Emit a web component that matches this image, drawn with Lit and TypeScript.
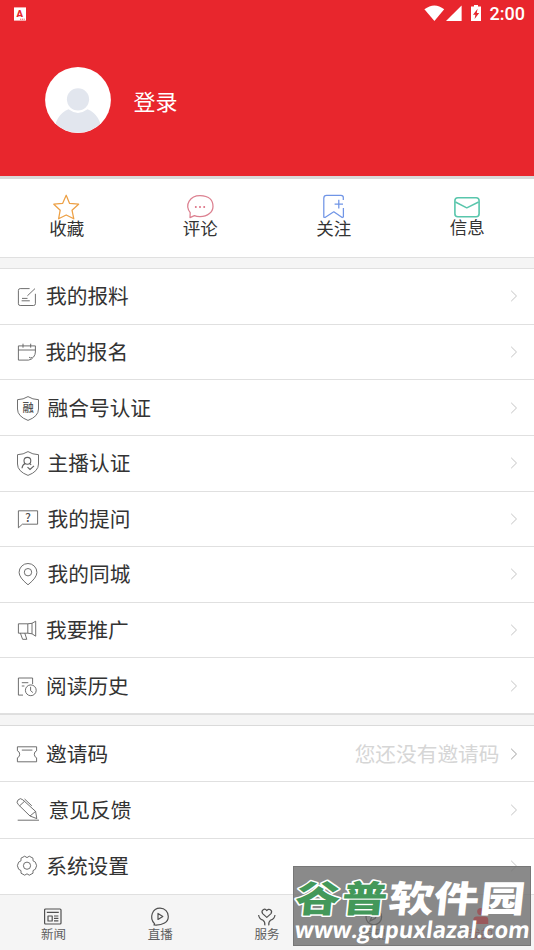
import { LitElement, html, svg, css } from "lit";
import { customElement } from "lit/decorators.js";

const shield = svg`<path d="M12 .6Q7.5 3.5 1.5 3.7V13Q1.5 20.4 12 24.4Q22.5 20.4 22.5 13V3.7Q16.5 3.5 12 .6Z"/>`;

const rowIcons: Record<string, unknown> = {
  edit: svg`<path d="M13.6 4.6H4.2Q2.4 4.6 2.4 6.4V19.8Q2.4 21.5 4.2 21.5H17.6Q19.4 21.5 19.4 19.7V9.8M19 4.6L11.4 11.8M6 14.4H11.5M5.6 16.8H13.8"/>`,
  calendar: svg`<path d="M19.4 12V5.9H2.4V20.1H12.5M2.4 10H19.4M7 3.7V7.7M14.7 3.7V7.7M19.4 12Q19.4 14.6 17.6 17Q15.8 19.6 12.5 20.1M13 17.2Q14.6 18.6 16.4 17.4"/>`,
  media: svg`${shield}<text x="6.4" y="16" font-size="11.3" font-weight="500">融</text>`,
  anchor: svg`${shield}<g stroke-width="1.1"><circle cx="11.4" cy="9.8" r="3.4"/><path d="M9.2 12.4Q6.3 13.6 6 17.3M13.4 12.4L15.2 13.8M11.5 16.2L14 18.5L18 14.8"/></g>`,
  ask: svg`<path d="M2.4 20.8V3.8H21.6V17.2H6.4Z"/><text x="8.9" y="14.6" font-size="12" font-weight="500">?</text>`,
  pin: svg`<path d="M12 22.8Q3.1 15.6 3.1 10.4A8.9 8.9 0 0 1 20.9 10.4Q20.9 15.6 12 22.8Z"/><circle cx="12" cy="10.2" r="3.7"/>`,
  promote: svg`<path d="M11.8 5.8H2.4V15.2H11.8ZM11.8 5.8L16 5.3L19.7 3.2V18.2L16 15.8L11.8 15.2M16 5.3V15.8M4.4 15.2L6.6 21.3H10.8L8.8 15.2"/>`,
  history: svg`<path d="M16.6 10V4H2.4V21.1H7M5.8 8.7H12.3M5.8 12H8.4"/><circle cx="14.8" cy="16.3" r="5.4"/><path d="M14.6 12.8V16.6L16.9 18.6"/>`,
  ticket: svg`<path d="M1.4 4.8H20.6V8.8Q18.3 9.6 18.3 12.3Q18.3 15 20.6 15.8V19.8H1.4V15.8Q3.7 15 3.7 12.3Q3.7 9.6 1.4 8.8ZM5.8 8.1H16.4"/>`,
  pencil: svg`<path d="M14 18L2.2 6.5A3.2 3.2 0 0 1 6.8 1.8L19.6 13.4L20.8 20.6ZM19.6 13.4L14 18M8.5 3.3L3.6 7.8M8.6 1L15.8 7.8M1.7 22.2H23"/>`,
  gear: svg`<path d="M8.7 2.2L11 3.6L13.3 2.2L17 4.2V6.8L19.4 8.2Q21.8 11.7 19.4 15.2L17 16.6V19.2L13.3 21.2L11 19.8L8.7 21.2L5 19.2V16.6L2.6 15.2Q.2 11.7 2.6 8.2L5 6.8V4.2Z" stroke-linejoin="round"/><circle cx="11" cy="11.7" r="3.6"/>`,
};

interface Row { icon: string; label: string; gap: number; note?: string }

const mainRows: Row[] = [
  { icon: "edit", label: "我的报料", gap: 6 },
  { icon: "calendar", label: "我的报名", gap: 5.4 },
  { icon: "media", label: "融合号认证", gap: 7.6 },
  { icon: "anchor", label: "主播认证", gap: 7.6 },
  { icon: "ask", label: "我的提问", gap: 7.6 },
  { icon: "pin", label: "我的同城", gap: 7.6 },
  { icon: "promote", label: "我要推广", gap: 6 },
  { icon: "history", label: "阅读历史", gap: 6 },
];

const moreRows: Row[] = [
  { icon: "ticket", label: "邀请码", gap: 6, note: "您还没有邀请码" },
  { icon: "pencil", label: "意见反馈", gap: 8.6 },
  { icon: "gear", label: "系统设置", gap: 6.2 },
];

const shortcuts = [
  { name: "star", label: "收藏", art: svg`<path stroke="#eda045" d="M13.2 1.2L16.6 9.4L25.6 10.2L19 16.2L20.8 24.8L13.2 21L5.6 24.8L7.2 16.2L.8 10.2L9.6 9.4Z"/>` },
  { name: "comment", label: "评论", art: svg`<path stroke="#dc8090" d="M4.2 18.6C-1.8 10.5 4.2 1.6 14 1.6S27 7 27 12.4S21.8 22.6 14 22.6Q10.5 22.6 8.4 21.6L4 23.6Z"/><g fill="#dc6f82"><circle cx="9.8" cy="13" r="1"/><circle cx="14" cy="13" r="1"/><circle cx="18.2" cy="13" r="1"/></g>` },
  { name: "follow", label: "关注", art: svg`<path stroke="#7095e6" d="M23.3 6V3.6Q23.3 1.4 21 1.4H6.6Q3.8 1.4 3.8 4.2V23.2L5 23.5L13.8 17.8L22.2 23.5L23.4 23V14M18.8 5.8V14.4M14.6 10.1H23"/>` },
  { name: "mail", label: "信息", art: svg`<rect stroke="#59c6ac" stroke-width="1.6" x="1.9" y="3.8" width="24.2" height="19" rx="3"/><path stroke="#59c6ac" stroke-width="1.5" d="M2.4 8L13.8 13.8L25.6 8"/>` },
];

const tabs = [
  { name: "news", label: "新闻", art: svg`<rect x="1.6" y="2" width="16.4" height="15" rx="1"/><path d="M3.8 5.4H15.8M5 9H9.2V14H5ZM11 9H15.4M11 11.4H15.4M11 13.8H15.4"/>` },
  { name: "live", label: "直播", art: svg`<path d="M4.6 16.8C-1.4 10.4 2.6 1.2 10 1.2C15 1.2 18.3 5 18.3 9.4C18.3 15.2 13 18.6 4 18ZM8 6.4V12.4L12.8 9.4Z"/>` },
  { name: "service", label: "服务", art: svg`<path d="M9.8 10.4L5.6 6.6C3.6 3.2 7.8.6 9.8 3.6C11.8.6 16 3.2 14 6.6ZM1.6 8Q2.2 12.2 6 13.2Q8.2 14.4 7.8 18.4M18 8Q17.4 12.2 13.6 13.2Q11.4 14.4 11.8 18.4"/>` },
  { name: "find", label: "发现", art: svg`<circle cx="9.8" cy="10" r="7.8"/><path d="M13.4 6.2L11.2 11.4L6 14L8.4 8.6Z"/>` },
  { name: "mine", label: "我的", art: svg`<g fill="#e8262d" stroke="none"><circle cx="9.8" cy="4.6" r="3.6"/><path d="M2.4 17V13Q2.4 9.6 6 9.6H13.6Q17.2 9.6 17.2 13V17Z"/></g>` },
];

@customElement("app-root")
export class AppRoot extends LitElement {
  static styles = css`
    :host { display: block; position: relative; width: 534px; height: 950px; overflow: hidden; background: #fff; color: #333; font-family: "Noto Sans CJK SC", sans-serif; }
    * { box-sizing: border-box; }
    svg { display: block; fill: none; overflow: visible; }
    .head { height: 179px; background: #e8262d; border-bottom: 3px solid #d9d9d9; color: #fff; display: flex; flex-direction: column; }
    .status { height: 27px; padding: 0 9px 0 14px; display: flex; align-items: center; justify-content: space-between; }
    .signals { display: flex; align-items: center; font: 500 18px/27px Roboto, sans-serif; }
    .user { display: flex; align-items: center; padding: 40px 0 0 45px; gap: 22.5px; font-size: 22px; }
    .user span { line-height: 32px; }
    .shortcuts { height: 79px; display: grid; grid-template-columns: repeat(4, 1fr); border-bottom: 1px solid #e0e0e0; }
    .short { display: flex; flex-direction: column; align-items: center; padding-top: 15px; font-size: 17.5px; line-height: 24px; }
    .short svg { width: 28px; height: 26px; stroke-width: 1.25; stroke-linejoin: round; }
    .short span { margin-top: -3.6px; }
    .short.mail span { margin-top: -5px; }
    .band { background: #f5f5f5; border-bottom: 1px solid #e0e0e0; }
    .band.one { height: 11px; }
    .band.two { height: 12px; border-top: 1px solid #dedede; border-bottom-color: #dadada; }
    .list.main { height: 445.1px; display: grid; grid-template-rows: repeat(8, 55.64px); }
    .list.more { display: grid; grid-template-rows: repeat(3, 56.3px); }
    .row { display: flex; align-items: center; padding: 0 16px 0 16px; border-bottom: 1px solid #e0e0e0; font-size: 20.7px; line-height: 30px; }
    .row > svg { width: 24px; height: 24px; flex: none; stroke: #606060; stroke-width: .9; }
    .row text { fill: #505050; stroke: none; }
    .row .label { flex: 1; padding-bottom: 2px; white-space: nowrap; }
    .note { color: #d6d6d6; margin-right: 10.5px; padding-bottom: 2px; }
    .row .arrow { width: 8px; height: 12px; stroke: #c4c4c4; stroke-width: 1; }
    .row .arrow.dark { stroke: #a0a0a0; }
    .tabs { height: 55px; background: #f5f5f5; display: grid; grid-template-columns: repeat(5, 1fr); }
    .tab { display: flex; flex-direction: column; align-items: center; padding-top: 12px; font-size: 12.5px; line-height: 18px; color: #606060; }
    .tab svg { width: 20px; height: 19px; stroke: #505050; stroke-width: 1.2; stroke-linejoin: round; }
    .tab span { margin-top: -1px; }
    .tab.mine { color: #e8262d; }
    .stamp { position: absolute; left: 293px; top: 866px; width: 238px; height: 80px; background: rgba(116, 116, 116, .84); border: 1px solid #777; }
    .stamp svg { width: 236px; height: 78px; }
    .brand { font: 900 43px "Noto Sans CJK SC", sans-serif; stroke: #fff; stroke-linejoin: round; paint-order: stroke; }
    .green { fill: #43985a; stroke-width: 3.4px; }
    .white { fill: #fff; }
    .site { font: 700 23px "Open Sans", sans-serif; fill: #fff; }
  `;

  private row(r: Row) {
    return html`<div class="row">
      <svg viewBox="0 0 24 24">${rowIcons[r.icon]}</svg>
      <span class="label" style="margin-left:${r.gap}px">${r.label}</span>
      ${r.note ? html`<span class="note">${r.note}</span>` : ""}
      <svg class="arrow ${r.note ? "dark" : ""}" viewBox="0 0 8 12"><path d="M1.2 .8L6.5 6L1.2 11.2"/></svg>
    </div>`;
  }

  render() {
    return html`
      <header class="head">
        <div class="status">
          <svg width="12" height="14" viewBox="0 0 12 14"><path fill="#fff" d="M0 .4H12V13.6H0Z"/><text x="2.6" y="9.6" font-size="9.5" font-weight="900" font-family="Roboto, sans-serif" fill="#e8262d">A</text><path stroke="#e8262d" stroke-width=".8" stroke-dasharray="1.2 .6" d="M6 12.2H11"/></svg>
          <div class="signals">
            <svg width="65" height="18" viewBox="0 0 65 18"><g fill="#fff"><path d="M-.6 4.2Q9.5-3.4 19.2 4.2L9.4 16Z"/><path d="M36.6 .6V16H21Z"/><path d="M46 1.6H49V0H53V1.6H56V16H46Z"/></g><path fill="#e8262d" d="M52.6 3.8L48 9.8H50.4L49.6 14L54.2 8H51.8Z"/></svg>
            <span>2:00</span>
          </div>
        </div>
        <div class="user">
          <svg width="66" height="66" viewBox="0 0 66 66"><defs><clipPath id="disc"><circle cx="33" cy="33" r="32.7"/></clipPath></defs><circle cx="33" cy="33" r="32.9" fill="#fff"/><g clip-path="url(#disc)"><path fill="#e2e6ee" d="M9 66Q10 48 23.5 42.3Q33 49.5 42.5 42.3Q56 48 57 66Z"/><circle cx="33" cy="32.3" r="11.1" fill="#e2e6ee"/></g></svg>
          <span>登录</span>
        </div>
      </header>
      <nav class="shortcuts">
        ${shortcuts.map((s) => html`<div class="short ${s.name}"><svg viewBox="0 0 28 26">${s.art}</svg><span>${s.label}</span></div>`)}
      </nav>
      <div class="band one"></div>
      <section class="list main">${mainRows.map((r) => this.row(r))}</section>
      <div class="band two"></div>
      <section class="list more">${moreRows.map((r) => this.row(r))}</section>
      <nav class="tabs">
        ${tabs.map((t) => html`<div class="tab ${t.name}"><svg viewBox="0 0 20 19">${t.art}</svg><span>${t.label}</span></div>`)}
      </nav>
      <div class="stamp">
        <svg viewBox="0 0 236 78">
          <g opacity=".4" stroke="#555" stroke-width="1.1" transform="translate(70 40)">${tabs[3].art}</g>
          <g opacity=".2" transform="translate(177 40)">${tabs[4].art}</g>
          <g class="brand" transform="translate(0 44.5) skewX(-6) scale(1.05 .85)">
            <text class="green" x="0 44.6" y="0">谷普</text>
            <text class="white" x="89 132 176" y="0" stroke="none">软件园</text>
          </g>
          <text class="site" transform="translate(0 71) skewX(-7)" textLength="235" lengthAdjust="spacingAndGlyphs">www.gupuxlazal.com</text>
        </svg>
      </div>`;
  }
}
